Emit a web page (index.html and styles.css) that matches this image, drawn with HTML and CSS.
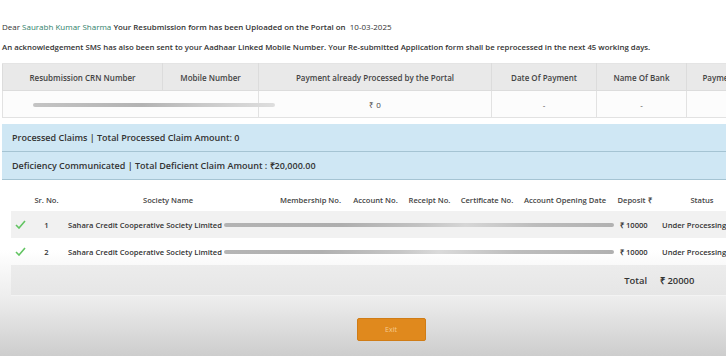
FILE: index.html
```html
<!DOCTYPE html>
<html>
<head>
<meta charset="utf-8">
<link rel="stylesheet" href="styles.css">
</head>
<body>
<div class="page">
  <p class="msg"><span class="dear">Dear</span> <span class="name">Saurabh Kumar Sharma</span> <span class="strong">Your Resubmission form has been Uploaded on the Portal on</span> &nbsp;<span class="date">10-03-2025</span></p>
  <p class="msg msg2">An acknowledgement SMS has also been sent to your Aadhaar Linked Mobile Number. Your Re-submitted Application form shall be reprocessed in the next 45 working days.</p>

  <table class="info">
    <colgroup>
      <col style="width:160px"><col style="width:96px"><col style="width:233px"><col style="width:105px"><col style="width:90px"><col style="width:90px">
    </colgroup>
    <thead>
      <tr>
        <th>Resubmission CRN Number</th>
        <th>Mobile Number</th>
        <th>Payment already Processed by the Portal</th>
        <th>Date Of Payment</th>
        <th>Name Of Bank</th>
        <th>Payment Mode</th>
      </tr>
    </thead>
    <tbody>
      <tr>
        <td colspan="2" class="blurcell"><div class="blur blur-top"></div></td>
        <td>₹ 0</td>
        <td class="dash">-</td>
        <td class="dash">-</td>
        <td></td>
      </tr>
    </tbody>
  </table>

  <div class="bar bar1">Processed Claims | Total Processed Claim Amount: 0</div>
  <div class="bar bar2">Deficiency Communicated | Total Deficient Claim Amount : ₹20,000.00</div>

  <table class="claims">
    <colgroup>
      <col style="width:19px"><col style="width:33px"><col style="width:210px"><col style="width:75px"><col style="width:55px"><col style="width:53px"><col style="width:62px"><col style="width:94px"><col style="width:45px"><col style="width:90px">
    </colgroup>
    <thead>
      <tr>
        <th></th>
        <th>Sr. No.</th>
        <th>Society Name</th>
        <th>Membership No.</th>
        <th>Account No.</th>
        <th>Receipt No.</th>
        <th>Certificate No.</th>
        <th>Account Opening Date</th>
        <th>Deposit ₹</th>
        <th>Status</th>
      </tr>
    </thead>
    <tbody>
      <tr class="odd">
        <td class="chk"><svg width="11" height="9" viewBox="0 0 11 9"><polyline points="1,5 4,8 10,1" fill="none" stroke="#62c462" stroke-width="1.6"/></svg></td>
        <td class="c">1</td>
        <td colspan="6" class="soc"><span class="socname">Sahara Credit Cooperative Society Limited</span><span class="blur blur-row"></span></td>
        <td class="dep">₹ 10000</td>
        <td class="status">Under Processing</td>
      </tr>
      <tr>
        <td class="chk"><svg width="11" height="9" viewBox="0 0 11 9"><polyline points="1,5 4,8 10,1" fill="none" stroke="#62c462" stroke-width="1.6"/></svg></td>
        <td class="c">2</td>
        <td colspan="6" class="soc"><span class="socname">Sahara Credit Cooperative Society Limited</span><span class="blur blur-row blur-row2"></span></td>
        <td class="dep">₹ 10000</td>
        <td class="status">Under Processing</td>
      </tr>
      <tr class="total">
        <td colspan="8"></td>
        <td class="tl">Total</td>
        <td class="tv">₹ 20000</td>
      </tr>
    </tbody>
  </table>

  <div class="actions">
    <button class="exit">Exit</button>
  </div>
</div>
</body>
</html>
```

FILE: styles.css
```css
html, body {
  margin: 0;
  padding: 0;
  width: 726px;
  height: 356px;
  overflow: hidden;
}
body {
  font-family: "Open Sans", "Liberation Sans", sans-serif;
  color: #333;
  background: linear-gradient(to bottom, #ffffff 0px, #ffffff 250px, #ececec 300px, #cdcdcd 356px);
}
.page {
  padding: 0 0 0 2px;
}
.msg {
  margin: 0;
  padding-top: 21px;
  height: 11px;
  font-size: 8px;
  line-height: 11px;
  color: #333;
  white-space: nowrap;
}
.strong {
  font-weight: 600;
  font-size: 7.9px;
  line-height: 10px;
}
.msg2 {
  padding-top: 10px;
  font-size: 7.8px;
  font-weight: 600;
}
.name {
  color: #2f7f6a;
}

table {
  border-collapse: collapse;
  table-layout: fixed;
}
.info {
  margin-top: 10px;
  width: 774px;
  font-size: 8px;
}
.info th {
  background: #e9e9e9;
  height: 26px;
  font-weight: 600;
  color: #444;
  border: 1px solid #dcdcdc;
  border-top-color: #e4e4e4;
  white-space: nowrap;
  overflow: hidden;
  padding: 0;
}
.info td {
  height: 26px;
  background: #fcfcfc;
  border: 1px solid #e2e2e2;
  text-align: center;
  color: #444;
  padding: 0;
}
.info td.blurcell {
  text-align: left;
  border-right: 0;
}
.dash {
  color: #d99b86;
}
.blur {
  display: block;
  height: 4px;
  border-radius: 2px;
  filter: blur(0.7px);
}
.blur-top {
  margin-left: 30px;
  width: 242px;
  background: linear-gradient(to right, #c4c4c4, #b3b3b3 45%, #c9c9c9 70%, #dedede);
  margin-top: 1px;
}

.bar {
  height: 27px;
  line-height: 27px;
  padding-left: 10px;
  background: #cfe7f4;
  border-bottom: 1px solid #a5c4d3;
  font-size: 9px;
  font-weight: 600;
  color: #333;
  white-space: nowrap;
}
.bar1 {
  margin-top: 6px;
}

.claims {
  margin-top: 9px;
  margin-left: 9px;
  width: 736px;
  font-size: 7.6px;
}
.claims th {
  height: 22px;
  font-weight: 600;
  color: #444;
  white-space: nowrap;
  padding: 0;
  text-align: center;
}
.claims td {
  height: 27px;
  padding: 0;
  white-space: nowrap;
  font-weight: 600;
  color: #333;
}
.claims tr.odd td {
  background: #f1f1f1;
}
.claims td.chk svg {
  display: block;
  margin: 0 0 0 4px;
}
.claims td.c {
  text-align: center;
}
.claims td.soc {
  padding-left: 5px;
}
.socname {
  display: inline-block;
  vertical-align: middle;
}
.blur-row {
  display: inline-block;
  vertical-align: middle;
  margin-left: 2px;
  width: 390px;
  background: linear-gradient(to right, #b3b3b3, #aeaeae 30%, #c2c2c2 50%, #d6d6d6 62%, #bcbcbc 80%, #b1b1b1);
}
.blur-row2 {
  background: linear-gradient(to right, #b5b5b5, #b0b0b0 25%, #c6c6c6 45%, #dadada 55%, #bdbdbd 75%, #b0b0b0);
}
.claims td.dep {
  padding-left: 8px;
}
.claims td.status {
  padding-left: 5px;
}
.claims tr.total td {
  height: 30px;
  background: linear-gradient(to bottom, #ececec, #e6e6e6);
  font-size: 9.4px;
  font-weight: 600;
  color: #333;
  border-bottom: 1px solid #f3f3f3;
}
.claims tr.total td.tl {
  text-align: right;
  padding-right: 10px;
}
.claims tr.total td.tv {
  text-align: left;
  padding-left: 3px;
}

.actions {
  display: flex;
  justify-content: center;
  padding-top: 22px;
  padding-left: 58px;
  padding-right: 4px;
}
.exit {
  width: 69px;
  height: 23px;
  border: 1px solid #d07c16;
  border-radius: 2px;
  background: #e0891d;
  color: #f6c98d;
  font-family: "Open Sans", "Liberation Sans", sans-serif;
  font-size: 7px;
  padding: 0;
}
```
